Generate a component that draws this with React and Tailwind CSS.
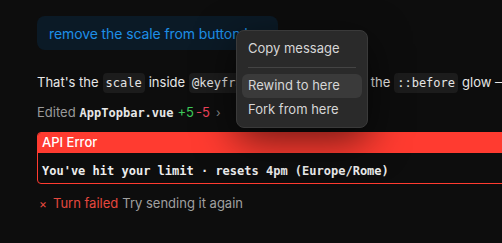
import React from "react";

function Code({ children }) {
  return (
    <code className="rounded-[4px] bg-[#1c1c1c] px-[3px] py-[1px] font-['DejaVu_Sans_Mono',monospace] text-[12px] text-[#e4e4e4]">
      {children}
    </code>
  );
}

function ContextMenu() {
  return (
    <div className="absolute left-[236px] top-[30px] w-[132px] rounded-[8px] border border-[#3a3a3a] bg-[#2a2a2a] px-[5px] pb-[5px] pt-[6px] text-[13px] text-[#d6d6d6] shadow-[0_12px_40px_rgba(0,0,0,0.6)]">
      <div className="flex h-[24px] items-center px-[6px]">Copy message</div>
      <div className="mx-[6px] my-[6px] h-px bg-[#444]" />
      <div className="flex h-[24px] items-center rounded-[6px] bg-[#3a3a3a] px-[6px]">Rewind to here</div>
      <div className="flex h-[24px] items-center px-[6px]">Fork from here</div>
    </div>
  );
}

export default function App() {
  return (
    <div className="relative h-[243px] w-[502px] overflow-hidden bg-[#0d0d0d] font-['Inter',sans-serif] text-[13px] whitespace-nowrap">
      <div className="pl-[37px] pt-[16px]">
        <div className="flex h-[34px] w-[241px] items-center overflow-hidden rounded-[8px] bg-[#0b1a26] pl-[12px] text-[14px] tracking-[-0.1px] text-[#1e8fe6]">
          <span className="truncate">remove the scale from button hover</span>
        </div>

        <div className="mt-[23px] flex h-[20px] items-center gap-[4px] text-[#e6e6e6]">
          <span>That's the</span>
          <Code>scale</Code>
          <span>inside</span>
          <Code>@keyframes</Code>
          <span>pulse, and also</span>
          <span className="ml-[3px]">the</span>
          <Code>::before</Code>
          <span>glow — it stacks on hover</span>
        </div>

        <div className="mt-[10px] flex h-[20px] items-center gap-[4px] text-[#9a9a9a]">
          <span>Edited</span>
          <span className="font-['DejaVu_Sans_Mono',monospace] text-[12px] font-semibold text-[#e6e6e6]">AppTopbar.vue</span>
          <span className="text-[#3ec95a]">+5</span>
          <span className="-ml-[2px] text-[#f0435c]">-5</span>
          <span className="ml-[2px] text-[12px] text-[#8a8a8a]">›</span>
        </div>

        <div className="mt-[9px] w-[490px] overflow-hidden rounded-[4px] border border-[#ff3b30]">
          <div className="flex h-[20px] items-center bg-[#ff3b30] px-[4px] text-[13px] font-medium text-white">
            API Error
          </div>
          <div className="flex h-[30px] items-center px-[4px] pt-[5px] font-['DejaVu_Sans_Mono',monospace] text-[12px] font-bold text-[#ececec]">
            You've hit your limit · resets 4pm (Europe/Rome)
          </div>
        </div>

        <div className="mt-[10px] flex h-[20px] items-center text-[#a0a0a0]">
          <span className="ml-[2px] mr-[6px] text-[12px] text-[#e5483e]">×</span>
          <span className="mr-[4px] text-[#e5483e]">Turn failed</span>
          <span>Try sending it again</span>
        </div>
      </div>

      <ContextMenu />
    </div>
  );
}
